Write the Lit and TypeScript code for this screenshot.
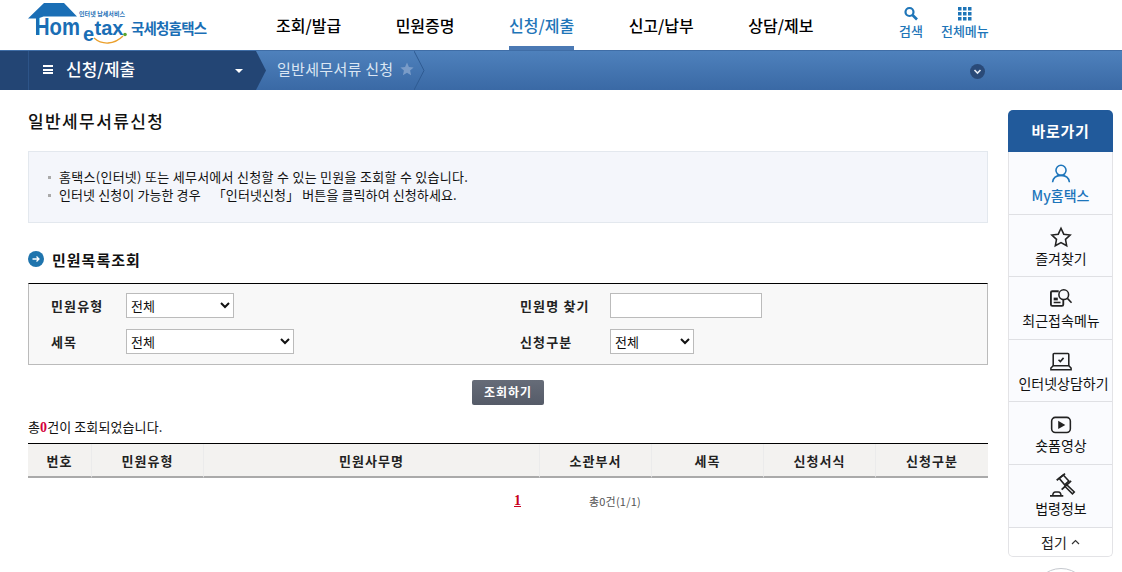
import { LitElement, html, css, svg } from "lit";
import { customElement } from "lit/decorators.js";

const NAV = ["조회/발급", "민원증명", "신청/제출", "신고/납부", "상담/제보"];
const COLS = [
  ["번호", 64], ["민원유형", 112], ["민원사무명", 336], ["소관부서", 112],
  ["세목", 112], ["신청서식", 112], ["신청구분", 112],
] as const;

const personIcon = svg`<circle cx="12" cy="8" r="5.500"/><path d="M2.800 21c.6-4.800 4-7.500 9.200-7.500s8.600 2.700 9.200 7.500"/>`;
const starIcon = svg`<path d="M12 2.500l3 6.400 7 .9-5.100 4.800 1.300 7-6.200-3.400-6.200 3.400 1.300-7-5.100-4.800 7-.9z"/>`;
const docIcon = svg`<path d="M9.500 3.500H2.500a1.500 1.500 0 0 0-1.500 1.500v13a1.500 1.500 0 0 0 1.500 1.500h10.500a1.500 1.500 0 0 0 1.500-1.500v-5.500" stroke-width="2"/><circle cx="15" cy="7.300" r="5.300"/><path d="M19 11.300l4.500 4.700"/><path d="M4 10.500h4.500v3H4z" fill="#222" stroke="none"/><path d="M4 15.800h7.500"/>`;
const laptopIcon = svg`<path d="M3.500 16V3.700a1 1 0 0 1 1-1h15a1 1 0 0 1 1 1V16"/><path d="M1 20.500h22v-2l-2.500-2.500h-17L1 18.500z"/><path d="M9.300 9.500l2 2 3.500-4"/>`;
const playIcon = svg`<rect x="1.800" y="4.800" width="20.400" height="16.500" rx="4"/><path d="M9.800 10l5.200 3-5.200 3z" fill="#222"/>`;
const gavelIcon = svg`<path d="M7.300 4.700l9.100-7.300M12.700 14.900L23 5.400" stroke-width="2"/><path d="M10 2.500l4.500-3.600 6 6.500-4.500 4.200z"/><path d="M17.500 8.800l9 8.600-2 2-8.900-8.700"/><path d="M0 21.700h14.500M3 21.700c0-2.500 1-4.300 3-4.300h3c2 0 3 1.800 3 4.300"/>`;

const RAIL = [
  { label: "My홈택스", icon: personIcon, my: true },
  { label: "즐겨찾기", icon: starIcon },
  { label: "최근접속메뉴", icon: docIcon },
  { label: "인터넷상담하기", icon: laptopIcon, nudge: true },
  { label: "숏폼영상", icon: playIcon },
  { label: "법령정보", icon: gavelIcon },
];

@customElement("app-root")
export class AppRoot extends LitElement {
  static styles = css`
    :host {
      display: block;
      width: 1122px;
      height: 572px;
      overflow: hidden;
      background: #fff;
      color: #111;
      font-family: "Noto Sans CJK KR", "Liberation Sans", sans-serif;
      font-size: 12px;
    }
    * { box-sizing: border-box; }
    .top {
      height: 50px;
      display: flex;
      align-items: stretch;
      padding-left: 28px;
    }
    .logo { width: 248px; flex: none; display: block; }
    .logo text { font-family: "Liberation Sans", sans-serif; font-weight: 700; fill: #1a6eb5; }
    .logo .ko { font-family: "Noto Sans CJK KR", sans-serif; }
    .nav { display: flex; gap: 54.500px; width: 600px; flex: none; }
    .nav a { flex: none; font-size: 16px; font-weight: 500; color: #000; }
    .nav a span { display: block; height: 50px; line-height: 50px; border-bottom: 4px solid transparent; }
    .nav a.on span { color: #1e75b8; border-bottom-color: #4b79b4; }
    .tools { display: flex; margin-left: 23px; gap: 18px; color: #1e75b8; font-size: 13px; font-weight: 500; }
    .tool { display: flex; flex-direction: column; align-items: center; padding-top: 6px; }
    .tool svg { display: block; height: 16px; width: 16px; }
    .tool span { line-height: 18px; }
    .sub {
      height: 40px;
      display: flex;
      align-items: center;
      background: linear-gradient(#4e81bc, #3a69a5);
      border-top: 1px solid #3f6da6;
      color: #fff;
    }
    .menu {
      height: 100%;
      width: 266px;
      flex: none;
      background: #234574;
      clip-path: polygon(0 0, 256px 0, 266px 50%, 256px 100%, 0 100%);
      display: flex;
      align-items: center;
      padding: 0 0 2px 43px;
      position: relative;
    }
    .menu::before { content: ""; position: absolute; left: 28px; top: 0; bottom: 0; width: 1px; background: #2d5488; }
    .burger { width: 10px; height: 9px; flex: none; border-top: 2px solid #fff; border-bottom: 2px solid #fff; position: relative; margin-right: 13px; }
    .burger::after { content: ""; position: absolute; left: 0; right: 0; top: 1.500px; height: 2px; background: #fff; }
    .menu b { font-size: 17px; font-weight: 500; width: 169px; flex: none; margin-bottom: 2px; white-space: nowrap; }
    .caret { width: 0; height: 0; border: 4px solid transparent; border-top: 4px solid #fff; border-bottom: 0; margin-top: 2px; }
    .crumb { margin: 0 0 5px 11px; font-size: 15px; color: #dbe6f3; letter-spacing: .3px; flex: none; }
    .star { width: 14px; height: 14px; margin: 0 0 3px 7px; flex: none; display: block; }
    .chev { width: 11px; height: 39px; flex: none; display: block; }
    .drop { margin: 1px 0 0 545px; width: 15px; height: 15px; flex: none; display: block; }
    .body { display: flex; align-items: flex-start; padding: 0 0 0 28px; gap: 20px; }
    .main { width: 960px; flex: none; }
    h1 { margin: 19px 0 0; font-size: 17px; line-height: 23px; font-weight: 500; letter-spacing: 1.400px; color: #111; }
    .info {
      margin: 19px 0 0;
      height: 72px;
      background: #f4f6fb;
      border: 1px solid #e3e8ee;
      padding: 16px 0 0 19px;
      list-style: none;
      font-size: 13px;
    }
    .info li { line-height: 18px; display: flex; align-items: center; letter-spacing: .28px; white-space: pre; }
    .info li + li { letter-spacing: .1px; }
    .info li::before { content: ""; width: 3px; height: 3px; background: #aaa; margin-right: 8px; flex: none; }
    h2 { display: flex; align-items: center; gap: 8px; margin: 26px 0 0; height: 20px; font-size: 15px; font-weight: 700; letter-spacing: 1px; color: #111; }
    h2 svg { width: 16px; height: 16px; flex: none; display: block; }
    .form {
      margin-top: 14px;
      height: 82px;
      background: #f8f8f8;
      border: 1px solid #bbb;
      border-top: 1px solid #000;
      padding: 9px 0 0 22px;
      display: grid;
      grid-template-columns: 75px 394px 90px 1fr;
      grid-auto-rows: 25px;
      row-gap: 11px;
      align-items: center;
    }
    .form label { font-weight: 700; font-size: 13px; letter-spacing: 1.150px; color: #222; white-space: pre; }
    select, input {
      display: block;
      height: 25px;
      background: #fff;
      border: 1px solid #bbb;
      border-radius: 0;
      font: 13px "Noto Sans CJK KR", sans-serif;
      color: #111;
      padding: 0;
    }
    .w108 { width: 108px; }
    .w168 { width: 168px; }
    .w84 { width: 84px; }
    .w152 { width: 152px; }
    .btnrow { display: flex; justify-content: center; margin-top: 15px; }
    button {
      width: 72px;
      height: 25px;
      border: 0;
      border-radius: 2px;
      background: linear-gradient(#666c78, #555b68);
      color: #fff;
      font: 700 12px "Noto Sans CJK KR", sans-serif;
      letter-spacing: 1px;
      padding: 0 0 2px;
    }
    .count { margin-top: 13px; height: 18px; line-height: 18px; font-size: 13px; letter-spacing: .1px; }
    .count b { color: #d4003c; font-family: "Liberation Serif", serif; font-size: 14px; }
    table { margin-top: 7px; width: 960px; border-collapse: separate; border-spacing: 0; table-layout: fixed; border-top: 1px solid #000; }
    th {
      height: 34px;
      padding: 0;
      background: #f3f2f0;
      border-right: 1px solid #ebebeb;
      border-bottom: 2px solid #aaa;
      font-size: 13px;
      font-weight: 700;
      letter-spacing: 1px;
      color: #222;
    }
    th:last-child { border-right: 0; }
    .pager { display: flex; height: 46px; align-items: center; padding: 0 0 0 486px; }
    .pager a { font: 700 14px "Liberation Serif", serif; color: #c8001e; text-decoration: underline; width: 75px; }
    .pager span { font-size: 11px; color: #555; letter-spacing: .2px; }
    .rail { width: 105px; flex: none; margin-top: 20px; }
    .rail-head {
      height: 42px;
      background: #215a9b;
      border-radius: 5px 5px 0 0;
      color: #fff;
      font-size: 15px;
      font-weight: 700;
      letter-spacing: .7px;
      display: flex;
      align-items: center;
      justify-content: center;
      padding-bottom: 2px;
    }
    .rail-list { border: 1px solid #e3e3e6; border-top: 0; border-radius: 0 0 5px 5px; background: #fff; }
    .rail-item {
      height: 62.600px;
      background: #fafbfe;
      border-bottom: 1px solid #dfe0e4;
      display: flex;
      flex-direction: column;
      align-items: center;
      padding-top: 11px;
      font-size: 14px;
      color: #111;
      white-space: nowrap;
    }
    .rail-item svg { width: 22px; height: 22px; display: block; fill: none; stroke: #222; stroke-width: 1.700; flex: none; overflow: visible; }
    .rail-item span { line-height: 19px; margin: 1px 0 0 1px; }
    .rail-item.nudge span { margin-left: 6px; }
    .rail-item.my { color: #1d75bb; font-weight: 500; }
    .rail-item.my span { margin-left: 0; }
    .rail-item.my svg { stroke: #1d75bb; }
    .fold { height: 28px; display: flex; align-items: center; justify-content: center; gap: 4px; font-size: 14px; color: #222; }
    .fold svg { width: 9px; height: 6px; display: block; }
    .top-btn { width: 56px; height: 56px; margin: 11px auto 0; border-radius: 50%; border: 1px solid #c5c8ce; background: #fff; }
  `;

  render() {
    return html`
      <div class="top">
        <svg class="logo" viewBox="0 0 248 50" aria-label="Hometax 국세청홈택스">
          <path d="M0 18.500L16 3h20l13 13.500H15.500L10 18.500z" fill="#1a6eb5"/>
          <path d="M8 17h3v18H8z" fill="#1a6eb5"/>
          <text transform="translate(7 35) scale(.88 1)" font-size="23">Hom</text>
          <text x="55" y="41" font-size="20" fill="#3c9bd6">e</text>
          <text x="66.500" y="35" font-size="20">tax</text>
          <circle cx="97" cy="34.500" r="1.800" fill="#5aa52e"/>
          <path d="M66 38c8 7 20 7 29-2" fill="none" stroke="#eba02c" stroke-width="1.300"/>
          <text class="ko" x="51" y="16" font-size="6" font-weight="500" fill="#1a6eb5" textLength="46">인터넷 납세서비스</text>
          <text class="ko" x="103" y="34" font-size="14.500" font-weight="500" textLength="76">국세청홈택스</text>
        </svg>
        <nav class="nav">
          ${NAV.map((n, i) => html`<a class=${i === 2 ? "on" : ""}><span>${n}</span></a>`)}
        </nav>
        <div class="tools">
          <div class="tool">
            <svg viewBox="0 0 16 16"><circle cx="6.500" cy="6" r="4" fill="none" stroke="#1e75b8" stroke-width="2.200"/><path d="M9.500 9l4.500 4.500" stroke="#1e75b8" stroke-width="2.600"/></svg>
            <span>검색</span>
          </div>
          <div class="tool">
            <svg viewBox="0 0 16 16" fill="#1e75b8">
              ${[1, 6, 11].flatMap((y) => [1, 6, 11].map((x) => svg`<rect x=${x} y=${y} width="3.500" height="3.500"/>`))}
            </svg>
            <span>전체메뉴</span>
          </div>
        </div>
      </div>
      <div class="sub">
        <div class="menu">
          <i class="burger"></i>
          <b>신청/제출</b>
          <i class="caret"></i>
        </div>
        <span class="crumb">일반세무서류 신청</span>
        <svg class="star" viewBox="0 0 24 24"><path d="M12 1l3.300 7.500 8 .8-6 5.400 1.700 8-7-4.100-7 4.100 1.700-8-6-5.400 8-.8z" fill="#7a9cc8"/></svg>
        <svg class="chev" viewBox="0 0 11 39"><path d="M0 0l10 19.500L0 39" fill="none" stroke="#2f5b92" stroke-width="1"/></svg>
        <svg class="drop" viewBox="0 0 15 15"><circle cx="7.500" cy="7.500" r="7.500" fill="#2a4a78"/><path d="M4.500 6l3 3 3-3" fill="none" stroke="#e4eaf3" stroke-width="1.600"/></svg>
      </div>
      <div class="body">
        <div class="main">
          <h1>일반세무서류신청</h1>
          <ul class="info">
            <li>홈택스(인터넷) 또는 세무서에서 신청할 수 있는 민원을 조회할 수 있습니다.</li>
            <li>인터넷 신청이 가능한 경우    「인터넷신청」 버튼을 클릭하여 신청하세요.</li>
          </ul>
          <h2>
            <svg viewBox="0 0 16 16"><circle cx="8" cy="8" r="8" fill="#1f74ad"/><path d="M4.500 8h6M8.500 5.500L11 8l-2.500 2.500" fill="none" stroke="#fff" stroke-width="1.300"/></svg>
            민원목록조회
          </h2>
          <div class="form">
            <label>민원유형</label>
            <select class="w108"><option>전체</option></select>
            <label>민원명 찾기</label>
            <input class="w152" type="text" />
            <label>세목</label>
            <select class="w168"><option>전체</option></select>
            <label>신청구분</label>
            <select class="w84"><option>전체</option></select>
          </div>
          <div class="btnrow"><button>조회하기</button></div>
          <div class="count">총<b>0</b>건이 조회되었습니다.</div>
          <table>
            <colgroup>${COLS.map(([, w]) => html`<col style="width:${w}px" />`)}</colgroup>
            <thead><tr>${COLS.map(([t]) => html`<th>${t}</th>`)}</tr></thead>
          </table>
          <div class="pager"><a>1</a><span>총0건(1/1)</span></div>
        </div>
        <aside class="rail">
          <div class="rail-head">바로가기</div>
          <div class="rail-list">
            ${RAIL.map((r) => html`
              <div class="rail-item ${r.my ? "my" : ""} ${r.nudge ? "nudge" : ""}">
                <svg viewBox="0 0 24 24">${r.icon}</svg>
                <span>${r.label}</span>
              </div>`)}
            <div class="fold">접기 <svg viewBox="0 0 9 6"><path d="M1 5l3.500-3.500L8 5" fill="none" stroke="#333" stroke-width="1.200"/></svg></div>
          </div>
          <div class="top-btn"></div>
        </aside>
      </div>
    `;
  }
}
